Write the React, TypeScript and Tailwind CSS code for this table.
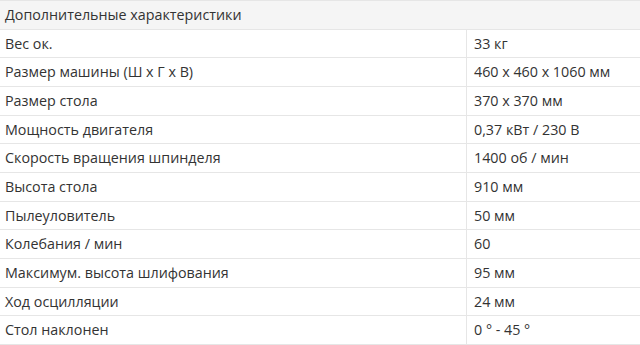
const rows: [string, string][] = [
  ['Вес ок.', '33 кг'],
  ['Размер машины (Ш x Г x В)', '460 x 460 x 1060 мм'],
  ['Размер стола', '370 x 370 мм'],
  ['Мощность двигателя', '0,37 кВт / 230 В'],
  ['Скорость вращения шпинделя', '1400 об / мин'],
  ['Высота стола', '910 мм'],
  ['Пылеуловитель', '50 мм'],
  ['Колебания / мин', '60'],
  ['Максимум. высота шлифования', '95 мм'],
  ['Ход осцилляции', '24 мм'],
  ['Стол наклонен', '0 ° - 45 °'],
]

export default function App() {
  return (
    <div className="h-[345px] w-[640px] overflow-hidden bg-white font-['Open_Sans',sans-serif] text-[14.3px] text-[#333]">
      <div className="border-t border-[#e6e6e6]">
        <div className="flex h-[28.67px] items-center border-b border-[#e6e6e6] bg-[#f5f5f5] pl-[5px]">
          Дополнительные характеристики
        </div>
        {rows.map(([label, value]) => (
          <div key={label} className="flex h-[28.67px] border-b border-[#e6e6e6]">
            <div className="flex w-[467px] items-center border-r border-[#e6e6e6] pl-[5px]">{label}</div>
            <div className="flex flex-1 items-center pl-[7px]">{value}</div>
          </div>
        ))}
      </div>
    </div>
  )
}
